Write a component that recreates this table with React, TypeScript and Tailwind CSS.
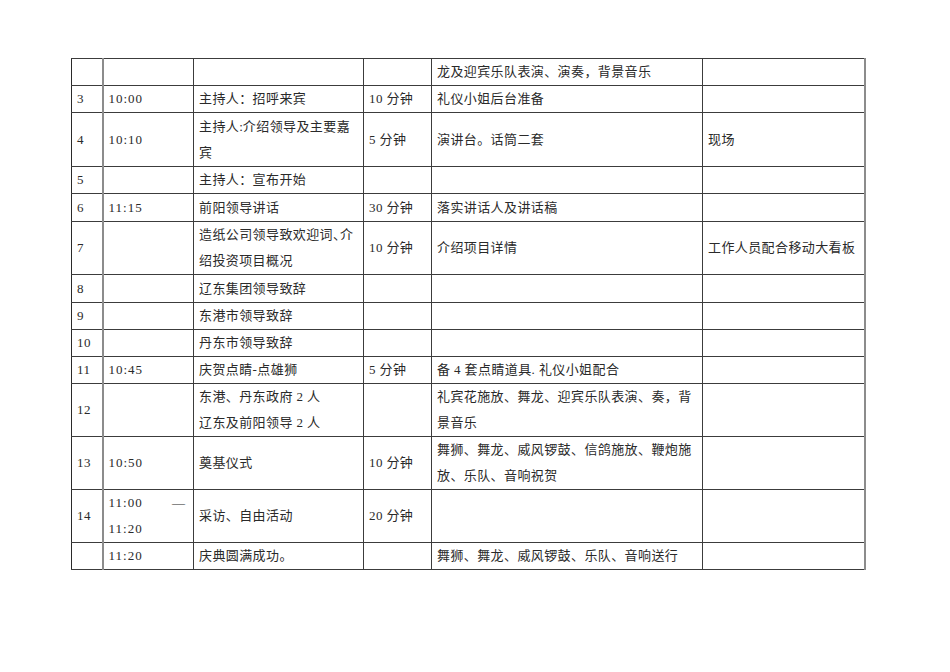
import type { ReactNode } from 'react'

type Row = {
  no: string
  time: ReactNode
  item: ReactNode
  dur: string
  prep: ReactNode
  note: string
  h: string
}

const rows: Row[] = [
  { no: '', time: '', item: '', dur: '', prep: '龙及迎宾乐队表演、演奏，背景音乐', note: '', h: 'h-[27px]' },
  { no: '3', time: '10:00', item: '主持人：招呼来宾', dur: '10 分钟', prep: '礼仪小姐后台准备', note: '', h: 'h-[27px]' },
  {
    no: '4',
    time: '10:10',
    item: (
      <>
        <div className="whitespace-nowrap">主持人<span className="tracking-normal">:</span>介绍领导及主要嘉</div>
        <div>宾</div>
      </>
    ),
    dur: '5 分钟',
    prep: '演讲台。话筒二套',
    note: '现场',
    h: 'h-[54px]',
  },
  { no: '5', time: '', item: '主持人：宣布开始', dur: '', prep: '', note: '', h: 'h-[27px]' },
  { no: '6', time: '11:15', item: '前阳领导讲话', dur: '30 分钟', prep: '落实讲话人及讲话稿', note: '', h: 'h-[28px]' },
  {
    no: '7',
    time: '',
    item: (
      <>
        <div className="whitespace-nowrap">造纸公司领导致欢迎词<span className="tracking-[-6px]">、</span>介</div>
        <div>绍投资项目概况</div>
      </>
    ),
    dur: '10 分钟',
    prep: '介绍项目详情',
    note: '工作人员配合移动大看板',
    h: 'h-[52px]',
  },
  { no: '8', time: '', item: '辽东集团领导致辞', dur: '', prep: '', note: '', h: 'h-[28px]' },
  { no: '9', time: '', item: '东港市领导致辞', dur: '', prep: '', note: '', h: 'h-[27px]' },
  { no: '10', time: '', item: '丹东市领导致辞', dur: '', prep: '', note: '', h: 'h-[26px]' },
  { no: '11', time: '10:45', item: '庆贺点睛-点雄狮', dur: '5 分钟', prep: '备 4 套点睛道具. 礼仪小姐配合', note: '', h: 'h-[27px]' },
  {
    no: '12',
    time: '',
    item: (
      <>
        <div>东港、丹东政府 2 人</div>
        <div>辽东及前阳领导 2 人</div>
      </>
    ),
    dur: '',
    prep: (
      <>
        <div className="whitespace-nowrap">礼宾花施放、舞龙、迎宾乐队表演、奏，背</div>
        <div>景音乐</div>
      </>
    ),
    note: '',
    h: 'h-[53px]',
  },
  {
    no: '13',
    time: '10:50',
    item: '奠基仪式',
    dur: '10 分钟',
    prep: (
      <>
        <div className="whitespace-nowrap">舞狮、舞龙、威风锣鼓、信鸽施放、鞭炮施</div>
        <div>放、乐队、音响祝贺</div>
      </>
    ),
    note: '',
    h: 'h-[53px]',
  },
  {
    no: '14',
    time: (
      <>
        <div className="flex justify-between pr-[2px]">
          <span>11:00</span>
          <span>—</span>
        </div>
        <div>11:20</div>
      </>
    ),
    item: '采访、自由活动',
    dur: '20 分钟',
    prep: '',
    note: '',
    h: 'h-[53px]',
  },
  { no: '', time: '11:20', item: '庆典圆满成功。', dur: '', prep: '舞狮、舞龙、威风锣鼓、乐队、音响送行', note: '', h: 'h-[27px]' },
]

const cell = 'border border-[#3c3c3c] px-[5px] py-0 align-middle text-left font-normal'

export default function App() {
  return (
    <div
      className="min-h-[672px] w-[950px] bg-white pl-[71px] pt-[58px] text-[13px] leading-[26px] tracking-[0.4px] text-[#2a2a2a]"
      style={{ fontFamily: '"Liberation Serif", "Noto Sans CJK SC", serif' }}
    >
      <table className="w-[793px] table-fixed border-collapse">
        <colgroup>
          <col className="w-[31px]" />
          <col className="w-[91px]" />
          <col className="w-[170px]" />
          <col className="w-[68px]" />
          <col className="w-[271px]" />
          <col className="w-[162px]" />
        </colgroup>
        <tbody>
          {rows.map((r, i) => (
            <tr key={i} className={r.h}>
              <td className={`${cell} border-l-[#2a2a2a]`}>{r.no}</td>
              <td className={`${cell} border-l-2 border-l-[#8c8c8c] tracking-[1px]`}>{r.time}</td>
              <td className={cell}>{r.item}</td>
              <td className={cell}>{r.dur}</td>
              <td className={cell}>{r.prep}</td>
              <td className={`${cell} border-r-2 border-r-[#8c8c8c]`}>{r.note}</td>
            </tr>
          ))}
        </tbody>
      </table>
    </div>
  )
}
